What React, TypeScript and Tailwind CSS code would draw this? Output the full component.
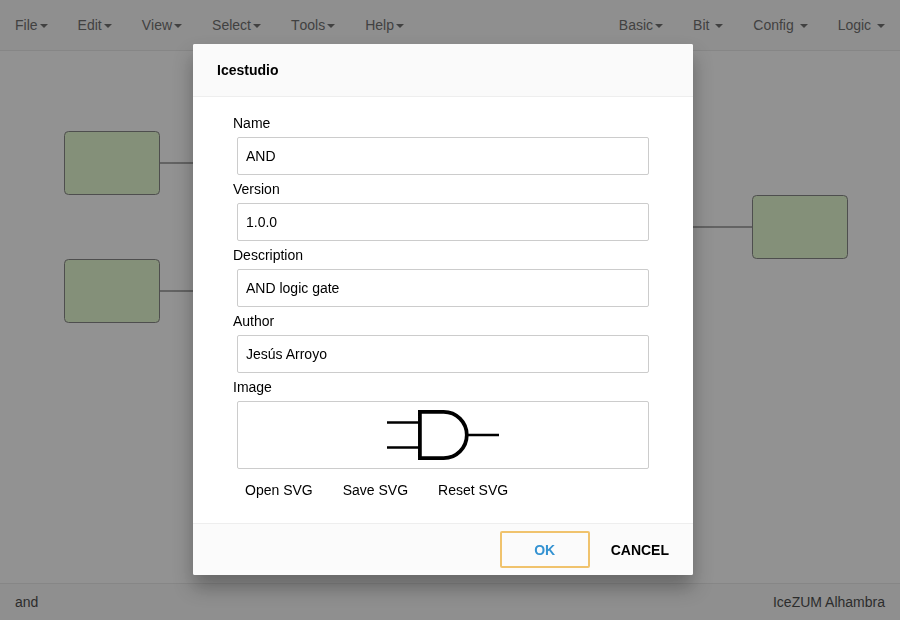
import React from 'react';

const mainMenus = ['File', 'Edit', 'View', 'Select', 'Tools', 'Help'];
const blockMenus = ['Basic', 'Bit ', 'Config ', 'Logic '];

const fields = [
  { id: 'name', label: 'Name', value: 'AND' },
  { id: 'version', label: 'Version', value: '1.0.0' },
  { id: 'description', label: 'Description', value: 'AND logic gate' },
  { id: 'author', label: 'Author', value: 'Jesús Arroyo' },
];

function MenuButton({ label }: { label: string }) {
  return (
    <button type="button" className="flex items-center px-[15px] leading-5 whitespace-pre text-[#5c5c5c]">
      {label}
      <span className="mt-0.5 ml-0.5 border-x-4 border-t-4 border-x-transparent border-t-current" />
    </button>
  );
}

function Diagram() {
  return (
    <svg className="block size-full" aria-hidden="true">
      <g fill="none" stroke="#a0a0a0" strokeWidth="2">
        <path d="M160 112H400V160" />
        <path d="M160 240H400V192" />
        <path d="M500 176H752" />
      </g>
      <g fill="#e2fbcc" stroke="#777777">
        <rect x="64.5" y="80.5" width="95" height="63" rx="4" />
        <rect x="64.5" y="208.5" width="95" height="63" rx="4" />
        <rect x="752.5" y="144.5" width="95" height="63" rx="4" />
      </g>
    </svg>
  );
}

function AndGate() {
  return (
    <svg width="112" height="50" viewBox="0 0 112 50" fill="none" stroke="#000000" aria-hidden="true">
      <path d="M0 12.4H32M0 37.5H32M81 25H112" strokeWidth="2.5" />
      <path d="M32.9 1.9H56.7A23.1 23.1 0 0 1 56.7 48.1H32.9Z" strokeWidth="3.75" />
    </svg>
  );
}

function ProjectDialog() {
  return (
    <div
      role="dialog"
      aria-labelledby="dialog-title"
      className="w-[500px] rounded-xs bg-white text-black shadow-[0_12px_20px_rgba(0,0,0,0.3)]"
    >
      <h1 id="dialog-title" className="rounded-t-xs border-b border-[#eeeeee] bg-[#fafafa] px-6 py-4 leading-5 font-bold">
        Icestudio
      </h1>
      <form className="px-10 pt-4 pb-[23px]">
        {fields.map((f) => (
          <div key={f.id} className="mb-1">
            <label htmlFor={f.id} className="mb-1 block leading-5">
              {f.label}
            </label>
            <div className="px-1">
              <input
                id={f.id}
                defaultValue={f.value}
                className="block h-[38px] w-full rounded-xs border border-[#cccccc] bg-white px-2 outline-none"
              />
            </div>
          </div>
        ))}
        <p className="mb-1 leading-5">Image</p>
        <div className="px-1">
          <div className="flex h-[68px] items-center justify-center rounded-xs border border-[#cccccc]">
            <AndGate />
          </div>
        </div>
        <div className="mt-[11px] flex gap-[30px] px-3 leading-5">
          <button type="button">Open SVG</button>
          <button type="button">Save SVG</button>
          <button type="button">Reset SVG</button>
        </div>
      </form>
      <div className="flex justify-end gap-[13px] rounded-b-xs border-t border-[#eeeeee] bg-[#fbfbfb] px-4 py-[7px] leading-5 font-bold">
        <button type="button" className="h-[37px] w-[90px] rounded-xs border-2 border-[#f0c36d] pt-px text-[#3593d2]">
          OK
        </button>
        <button type="button" className="h-[37px] px-2 pt-px">
          CANCEL
        </button>
      </div>
    </div>
  );
}

export default function App() {
  return (
    <div className="flex h-screen flex-col overflow-hidden bg-white font-['Liberation_Sans',Arial,sans-serif] text-[14px]">
      <nav className="flex h-[51px] shrink-0 justify-between border-b border-[#e7e7e7] bg-[#f8f8f8] [font-kerning:none]">
        <div className="flex">
          {mainMenus.map((m) => (
            <MenuButton key={m} label={m} />
          ))}
        </div>
        <div className="flex">
          {blockMenus.map((m) => (
            <MenuButton key={m} label={m} />
          ))}
        </div>
      </nav>
      <main className="min-h-0 flex-1">
        <Diagram />
      </main>
      <footer className="flex h-[37px] shrink-0 items-center justify-between border-t border-[#e7e7e7] bg-[#f8f8f8] px-[15px] text-[#333333]">
        <span>and</span>
        <span>IceZUM Alhambra</span>
      </footer>
      <div className="fixed inset-0 flex items-start justify-center bg-[#252525]/50 pt-11 pr-[14px]">
        <ProjectDialog />
      </div>
    </div>
  );
}
